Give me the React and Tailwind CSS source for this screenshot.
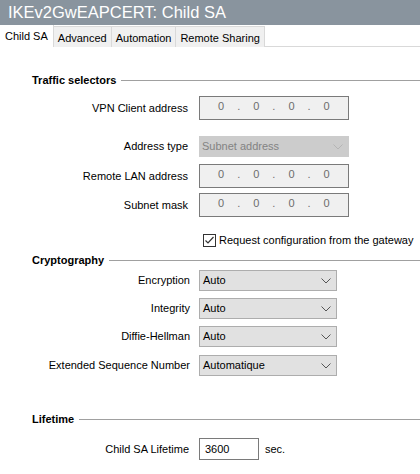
import React, { useState } from 'react';

const tabs = ['Child SA', 'Advanced', 'Automation', 'Remote Sharing'];

const Chevron = ({ light }) => (
  <svg width="10" height="6" viewBox="0 0 10 6" className="shrink-0">
    <path d="M0.5 0.5 L5 5 L9.5 0.5" fill="none" stroke={light ? '#b5b5b5' : '#555'} strokeWidth="1" />
  </svg>
);

const Section = ({ title, className }) => (
  <div className={`flex items-center h-4 pl-8 ${className}`}>
    <span className="font-bold text-black">{title}</span>
    <div className="flex-1 h-px bg-[#a0a0a0] ml-[5px]" />
  </div>
);

const Row = ({ label, labelW = 'w-[188px]', gap = 'ml-[11px]', children, className }) => (
  <div className={`flex items-center ${className}`}>
    <div className={`${labelW} text-right shrink-0 whitespace-nowrap`}>{label}</div>
    <div className={`${gap} flex items-center`}>{children}</div>
  </div>
);

const IpField = () => (
  <div className="w-[150px] h-6 border border-[#7a7a7a] bg-[#f0f0f0] flex items-center text-[#6d6d6d] pb-[3px]">
    <span className="ml-[18px]">0</span>
    <span className="ml-[13px]">.</span>
    <span className="ml-[13px]">0</span>
    <span className="ml-[13px]">.</span>
    <span className="ml-[13px]">0</span>
    <span className="ml-[13px]">.</span>
    <span className="ml-[13px]">0</span>
  </div>
);

const Select = ({ value, w = 'w-[138px]' }) => (
  <div className={`${w} h-[21px] border border-[#adadad] bg-[#e1e1e1] flex items-center justify-between pl-[3px] pr-[5px] text-black`}>
    <span>{value}</span>
    <Chevron />
  </div>
);

export default function App() {
  const [tab, setTab] = useState(0);
  const [checked, setChecked] = useState(true);

  return (
    <div className="w-[420px] h-[474px] bg-white overflow-hidden text-[11px] leading-[13px] text-black" style={{ fontFamily: '"Liberation Sans", Arial, sans-serif' }}>
      <div className="h-[25px] bg-[#89949e] text-white text-[16.5px] pl-[8px] flex items-center leading-none">
        IKEv2GwEAPCERT: Child SA
      </div>

      <div className="flex h-[22px] border-b border-[#d9d9d9] bg-white">
        {tabs.map((t, i) => (
          <button
            key={t}
            onClick={() => setTab(i)}
            className={
              i === tab
                ? 'h-[22px] px-[5px] bg-white border-r border-[#d9d9d9] relative leading-[13px]'
                : 'h-[21px] mt-px px-[4px] bg-[#f0f0f0] border border-l-0 border-b-0 border-[#d9d9d9] pt-[2px] leading-[13px]'
            }
          >
            {t}
          </button>
        ))}
      </div>

      <Section title="Traffic selectors" className="mt-[25px]" />

      <Row label="VPN Client address" className="mt-[8px]">
        <IpField />
      </Row>

      <Row label="Address type" className="mt-[16px]">
        <div className="w-[150px] h-[21px] bg-[#cccccc] flex items-center justify-between pl-[3px] pr-[6px] text-[#838383]">
          <span>Subnet address</span>
          <Chevron light />
        </div>
      </Row>

      <Row label="Remote LAN address" className="mt-[7px]">
        <IpField />
      </Row>

      <Row label="Subnet mask" className="mt-[5px]">
        <IpField />
      </Row>

      <div className="flex items-center h-[13px] mt-[17px] pl-[203px]">
        <button
          onClick={() => setChecked(!checked)}
          className="w-[13px] h-[13px] shrink-0 border border-[#333] bg-white flex items-center justify-center"
        >
          {checked && (
            <svg width="11" height="11" viewBox="0 0 11 11">
              <path d="M1.5 5.5 L4 8 L9.5 2" fill="none" stroke="#333" strokeWidth="1.2" />
            </svg>
          )}
        </button>
        <span className="ml-[3px] whitespace-nowrap">Request configuration from the gateway</span>
      </div>

      <Section title="Cryptography" className="mt-[5px]" />

      <Row label="Encryption" labelW="w-[190px]" gap="ml-[9px]" className="mt-[2px]">
        <Select value="Auto" />
      </Row>
      <Row label="Integrity" labelW="w-[190px]" gap="ml-[9px]" className="mt-[7px]">
        <Select value="Auto" />
      </Row>
      <Row label="Diffie-Hellman" labelW="w-[190px]" gap="ml-[9px]" className="mt-[7px]">
        <Select value="Auto" />
      </Row>
      <Row label="Extended Sequence Number" labelW="w-[190px]" gap="ml-[9px]" className="mt-[8px]">
        <Select value="Automatique" />
      </Row>

      <Section title="Lifetime" className="mt-[35px]" />

      <Row label="Child SA Lifetime" labelW="w-[189px]" gap="ml-[10px]" className="mt-[11px]">
        <div className="w-[60px] h-[22px] border border-[#7a7a7a] bg-white flex items-center pl-[5px]">3600</div>
        <span className="ml-[6px]">sec.</span>
      </Row>
    </div>
  );
}
